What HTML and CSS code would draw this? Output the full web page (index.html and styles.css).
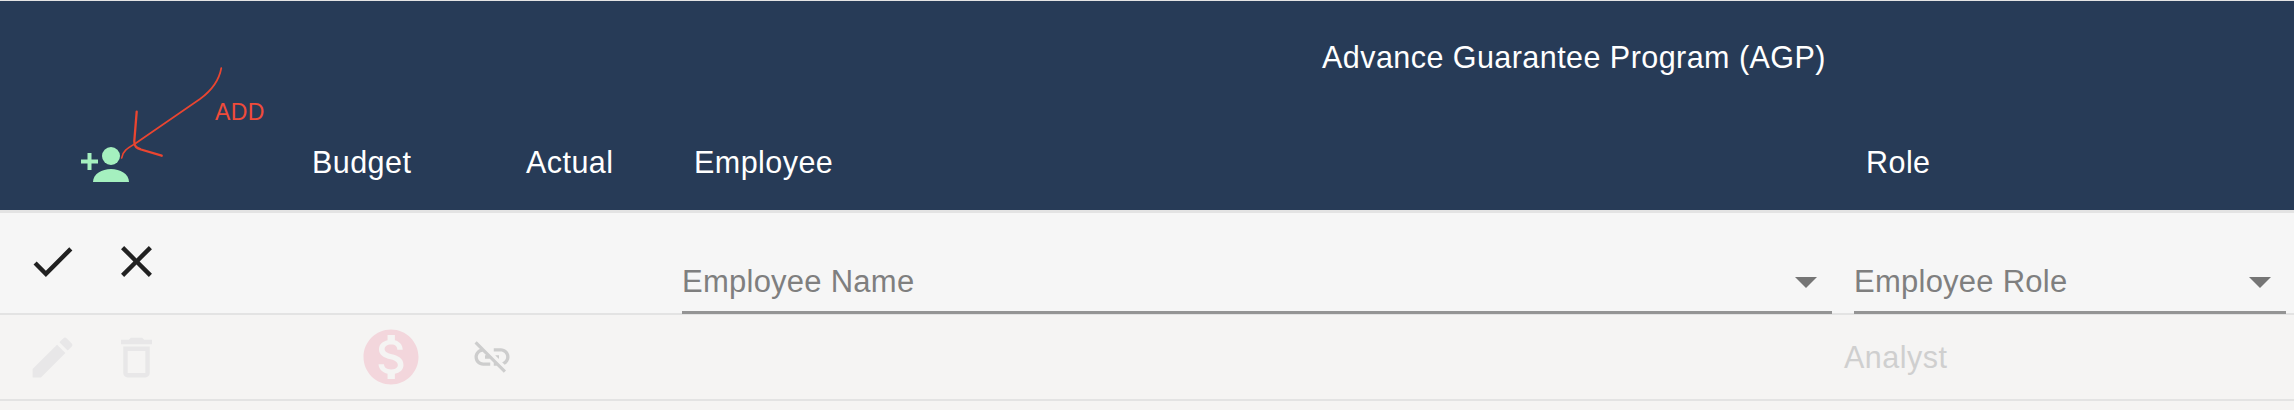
FILE: index.html
```html
<!DOCTYPE html>
<html lang="en">
<head>
<meta charset="utf-8">
<title>Advance Guarantee Program</title>
<link rel="stylesheet" href="styles.css">
</head>
<body>
<div class="page">
  <header class="head">
    <div class="head-title">Advance Guarantee Program (AGP)</div>
    <div class="head-cols">
      <div class="head-add">
        <svg class="add-icon" width="50" height="36" viewBox="0 0 50 36"><path d="M7.5 6h4v6.500H18v4h-6.500V23h-4v-6.500H1v-4h6.500z"/><circle cx="31" cy="9" r="9"/><path d="M13 35c0-8 9-13 18-13s18 5 18 13z"/></svg>
      </div>
      <div>Budget</div>
      <div>Actual</div>
      <div>Employee</div>
      <div>Role</div>
    </div>
    <svg class="annot-arrow" width="300" height="209" viewBox="0 0 300 209">
      <path class="annot-shaft" d="M221.300 67C219 80 211 90 200 98L135 142.700C128 147 122.500 150 121.700 157"/>
      <path class="annot-head" d="M136.700 110.700L134.300 140C134 146 137 147 141 148.500L161.700 154.700"/>
    </svg>
    <span class="annot-label">ADD</span>
  </header>

  <section class="row row-edit">
    <div class="actions">
      <svg class="ico ico-dark" viewBox="0 0 24 24"><path d="M9 16.170L4.830 12l-1.420 1.410L9 19 21 7l-1.410-1.410z"/></svg>
      <svg class="ico ico-dark" viewBox="0 0 24 24"><path d="M19 6.410L17.590 5 12 10.590 6.410 5 5 6.410 10.590 12 5 17.590 6.410 19 12 13.410 17.590 19 19 17.590 13.410 12z"/></svg>
    </div>
    <div class="field field-name">
      <span>Employee Name</span>
      <svg class="caret" width="22" height="11" viewBox="0 0 22 11"><path d="M0 0h22L11 11z"/></svg>
    </div>
    <div class="field field-role">
      <span>Employee Role</span>
      <svg class="caret" width="22" height="11" viewBox="0 0 22 11"><path d="M0 0h22L11 11z"/></svg>
    </div>
  </section>

  <section class="row row-item">
    <div class="actions">
      <svg class="ico ico-faint" viewBox="0 0 24 24"><path d="M3 17.250V21h3.750L17.810 9.940l-3.750-3.750L3 17.250zM20.710 7.040c.39-.39.39-1.020 0-1.410l-2.340-2.340c-.39-.39-1.020-.39-1.410 0l-1.830 1.830 3.750 3.750 1.830-1.830z"/></svg>
      <svg class="ico ico-faint" viewBox="0 0 24 24"><path d="M6 19c0 1.100.9 2 2 2h8c1.100 0 2-.9 2-2V7H6v12zM8 9h8v10H8V9zm7.500-5l-1-1h-5l-1 1H5v2h14V4z"/></svg>
    </div>
    <svg class="ico-money" viewBox="0 0 24 24"><path d="M12 2C6.480 2 2 6.480 2 12s4.480 10 10 10 10-4.480 10-10S17.520 2 12 2zm1.410 16.090V20h-2.670v-1.930c-1.710-.36-3.160-1.460-3.270-3.400h1.960c.1 1.050.82 1.870 2.650 1.870 1.960 0 2.400-.98 2.400-1.590 0-.83-.44-1.610-2.670-2.140-2.480-.6-4.180-1.620-4.180-3.670 0-1.720 1.390-2.840 3.110-3.210V4h2.670v1.950c1.860.45 2.790 1.860 2.850 3.390H14.300c-.05-1.110-.64-1.870-2.220-1.870-1.500 0-2.400.68-2.400 1.640 0 .84.65 1.390 2.670 1.910s4.180 1.390 4.180 3.910c-.01 1.830-1.380 2.830-3.120 3.160z"/></svg>
    <svg class="ico-link" viewBox="0 0 24 24"><path d="M17 7h-4v1.900h4c1.710 0 3.100 1.390 3.100 3.100 0 1.430-.98 2.630-2.310 2.980l1.460 1.460C20.880 15.610 22 13.950 22 12c0-2.760-2.240-5-5-5zm-1 4h-2.190l2 2H16zM2 4.270l3.110 3.110C3.290 8.120 2 9.910 2 12c0 2.760 2.240 5 5 5h4v-1.900H7c-1.710 0-3.100-1.390-3.100-3.100 0-1.590 1.210-2.900 2.760-3.070L8.730 11H8v2h2.730L13 15.270V17h1.730l4.010 4L20 19.740 3.270 3 2 4.270z"/></svg>
    <div class="item-role">Analyst</div>
  </section>
</div>
</body>
</html>
```

FILE: styles.css
```css
html, body {
  margin: 0;
  padding: 0;
  background: #f5f4f3;
}

.page {
  width: 2294px;
  min-height: 410px;
  border-top: 1px solid #e4e4e4;
  box-sizing: border-box;
  font-family: "Liberation Sans", Arial, sans-serif;
  overflow: hidden;
}

.head {
  position: relative;
  box-sizing: border-box;
  height: 209px;
  padding-top: 38px;
  background: #273b57;
  color: #fff;
  font-size: 30.500px;
  line-height: 36px;
  letter-spacing: 0.450px;
}

.head-title {
  margin-left: 1322px;
  margin-bottom: 69px;
}

.head-cols {
  display: grid;
  grid-template-columns: 312px 214px 168px 1172px 1fr;
}

.head-add {
  padding: 3px 0 0 80px;
}

.add-icon {
  display: block;
  fill: #a5f0bf;
}

.annot-arrow {
  position: absolute;
  left: 0;
  top: 0;
  fill: none;
  stroke: #ea4530;
  stroke-linecap: round;
  stroke-linejoin: round;
}

.annot-shaft {
  stroke-width: 1.700px;
}

.annot-head {
  stroke-width: 2.300px;
}

.annot-label {
  position: absolute;
  left: 215px;
  top: 97px;
  color: #f04b3a;
  font-size: 23px;
  line-height: 28px;
}

.row {
  box-sizing: border-box;
  display: flex;
  border-bottom: 2px solid #e3e3e3;
}

.row-edit {
  height: 105px;
  border-top: 3px solid #e3e3e3;
  background: #f6f6f6;
  padding: 22px 8px 0 26px;
}

.row-item {
  height: 86px;
  align-items: center;
  padding-left: 26px;
  background: #f5f4f3;
}

.actions {
  display: flex;
  gap: 31px;
  flex: none;
  width: 656px;
  align-items: flex-start;
}

.row-item .actions {
  width: 332px;
  align-items: center;
}

.ico {
  width: 53px;
  height: 53px;
  flex: none;
}

.ico-dark {
  fill: #212121;
}

.ico-faint {
  fill: #e8e7e8;
}

.ico-money {
  flex: none;
  width: 66px;
  height: 66px;
  fill: #f3d6dc;
}

.ico-link {
  flex: none;
  width: 42px;
  height: 42px;
  margin-left: 47px;
  fill: #cdcdcd;
}

.field {
  box-sizing: border-box;
  display: flex;
  justify-content: space-between;
  align-items: center;
  height: 50px;
  margin-top: 29px;
  padding-right: 15px;
  padding-bottom: 11px;
  border-bottom: 3px solid #949494;
  color: #7f7f7f;
  font-size: 31px;
  line-height: 36px;
  letter-spacing: 0.250px;
}

.field-name {
  width: 1150px;
  margin-right: 22px;
}

.field-role {
  width: 432px;
}

.caret {
  fill: #757575;
}

.item-role {
  margin-left: 1331px;
  color: #cfcfcf;
  font-size: 30.500px;
  line-height: 36px;
  letter-spacing: 0.500px;
}
```
